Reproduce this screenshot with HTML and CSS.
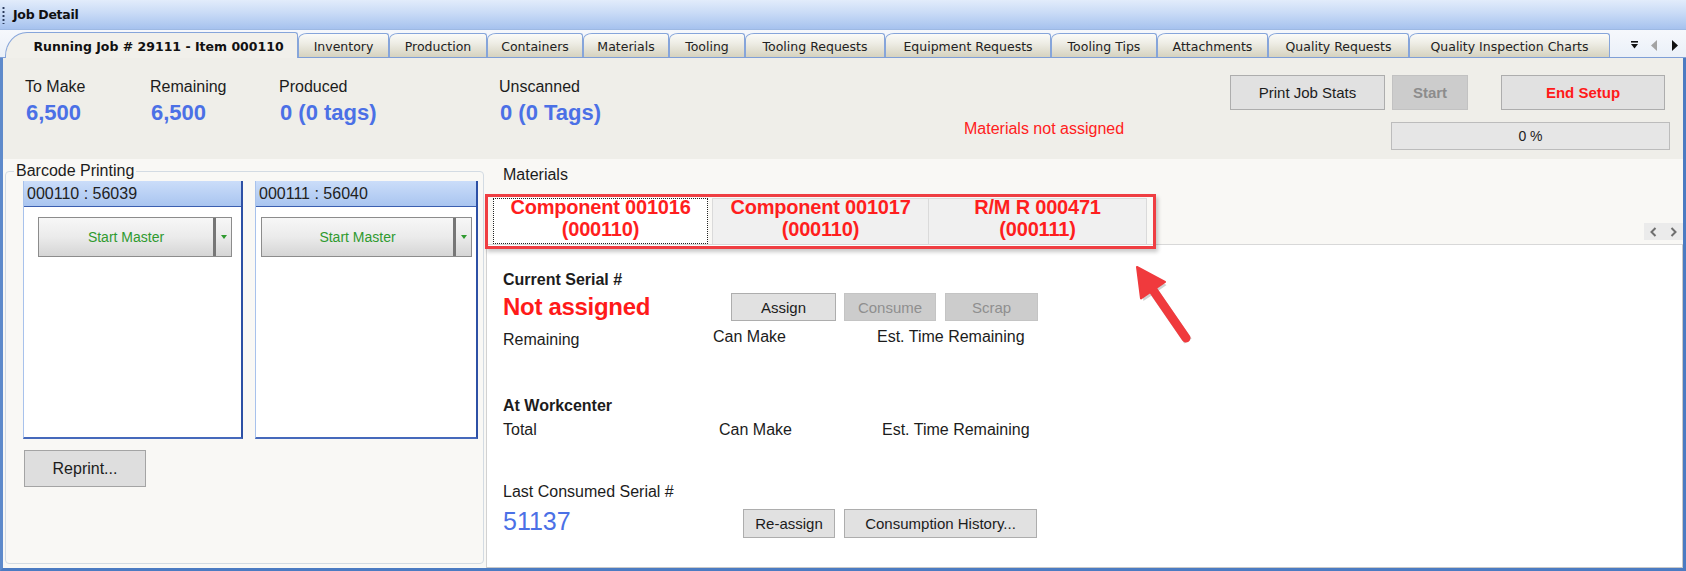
FILE: index.html
```html
<!DOCTYPE html>
<html lang="en">
<head>
<meta charset="utf-8">
<title>Job Detail</title>
<link rel="stylesheet" href="styles.css">
</head>
<body>
<div class="window">
  <div class="titlebar">
    <span class="grip"></span>
    <span class="title">Job Detail</span>
  </div>

  <div class="tabstrip">
    <div class="tab active">Running Job # 29111 - Item 000110</div>
    <div class="tab t-inv">Inventory</div>
    <div class="tab t-prod">Production</div>
    <div class="tab t-cont">Containers</div>
    <div class="tab t-mat">Materials</div>
    <div class="tab t-tool">Tooling</div>
    <div class="tab t-treq">Tooling Requests</div>
    <div class="tab t-ereq">Equipment Requests</div>
    <div class="tab t-tips">Tooling Tips</div>
    <div class="tab t-att">Attachments</div>
    <div class="tab t-qreq">Quality Requests</div>
    <div class="tab t-qic">Quality Inspection Charts</div>
    <div class="tab-nav">
      <svg class="nav-list" width="9" height="10" viewBox="0 0 9 10"><rect x="1" y="1" width="7" height="1.6" fill="#111"/><path d="M1 4h7l-3.5 4.5z" fill="#111"/></svg>
      <svg class="nav-prev" width="6" height="11" viewBox="0 0 6 11"><path d="M6 0v11L0 5.5z" fill="#a3a3a3"/></svg>
      <svg class="nav-next" width="6" height="11" viewBox="0 0 6 11"><path d="M0 0v11l6-5.5z" fill="#111"/></svg>
    </div>
  </div>

  <div class="page">
    <div class="stats-panel">
      <div class="stats">
        <div class="stat stat-make"><div class="lbl">To Make</div><div class="val">6,500</div></div>
        <div class="stat stat-rem"><div class="lbl">Remaining</div><div class="val">6,500</div></div>
        <div class="stat stat-prod"><div class="lbl">Produced</div><div class="val">0 (0 tags)</div></div>
        <div class="stat"><div class="lbl">Unscanned</div><div class="val">0 (0 Tags)</div></div>
      </div>
      <div class="msg">Materials not assigned</div>
      <div class="actions">
        <div class="action-row">
          <button class="btn btn-print">Print Job Stats</button>
          <button class="btn btn-start" disabled>Start</button>
          <button class="btn btn-end">End Setup</button>
        </div>
        <div class="progress">0 %</div>
      </div>
    </div>

    <div class="lower">
      <fieldset class="barcode">
        <legend>Barcode Printing</legend>
        <div class="barcode-inner">
          <div class="panels">
            <div class="bpanel bpanel-a">
              <div class="bhead">000110 : 56039</div>
              <div class="split split-a">
                <span class="split-main">Start Master</span>
                <span class="split-arrow"><svg width="6" height="4" viewBox="0 0 6 4"><path d="M0 0h6L3 4z" fill="#2f9a2f"/></svg></span>
              </div>
            </div>
            <div class="bpanel bpanel-b">
              <div class="bhead">000111 : 56040</div>
              <div class="split split-b">
                <span class="split-main">Start Master</span>
                <span class="split-arrow"><svg width="6" height="4" viewBox="0 0 6 4"><path d="M0 0h6L3 4z" fill="#2f9a2f"/></svg></span>
              </div>
            </div>
          </div>
          <button class="btn btn-reprint">Reprint...</button>
        </div>
      </fieldset>

      <div class="materials">
        <div class="mat-label">Materials</div>
        <div class="mat-tabs">
          <div class="mtab sel"><div class="mtab-text">Component 001016<br>(000110)</div></div>
          <div class="mtab mtab-2"><div class="mtab-text">Component 001017<br>(000110)</div></div>
          <div class="mtab mtab-3"><div class="mtab-text">R/M R 000471<br>(000111)</div></div>
          <div class="mat-scroll">
            <svg width="7" height="10" viewBox="0 0 7 10"><path d="M5.5 1L1.5 5l4 4" fill="none" stroke="#6f6f6f" stroke-width="2"/></svg>
            <svg width="7" height="10" viewBox="0 0 7 10"><path d="M1.5 1l4 4-4 4" fill="none" stroke="#6f6f6f" stroke-width="2"/></svg>
          </div>
        </div>
        <div class="mat-body">
          <div class="sec-title cs-title">Current Serial #</div>
          <div class="row row-serial">
            <div class="cell-serial not-assigned">Not assigned</div>
            <button class="btn btn-assign">Assign</button>
            <button class="btn btn-dis btn-consume" disabled>Consume</button>
            <button class="btn btn-dis btn-scrap" disabled>Scrap</button>
          </div>
          <div class="row row-info1">
            <div class="c-rem">Remaining</div>
            <div class="c-can1">Can Make</div>
            <div>Est. Time Remaining</div>
          </div>
          <div class="sec-title wc-title">At Workcenter</div>
          <div class="row row-info2">
            <div class="c-total">Total</div>
            <div class="c-can2">Can Make</div>
            <div>Est. Time Remaining</div>
          </div>
          <div class="last-label">Last Consumed Serial #</div>
          <div class="row row-last">
            <div class="cell-last last-val">51137</div>
            <button class="btn btn-reassign">Re-assign</button>
            <button class="btn btn-history">Consumption History...</button>
          </div>
        </div>

        <div class="highlight"></div>
        <svg class="callout-arrow" width="80" height="95" viewBox="0 0 80 95">
          <g fill="#000" opacity="0.18" transform="translate(2,3)">
            <path d="M17 12 L44.6 27.1 L36.7 32.5 L69.7 80.4 L62.3 85.6 L29.3 37.7 L21.4 43.1 Z"/>
          </g>
          <line x1="33" y1="35" x2="66" y2="83" stroke="#f03a3d" stroke-width="9" stroke-linecap="round"/>
          <path d="M17 12 L45 27 L21 43.5 Z" fill="#f03a3d" stroke="#f03a3d" stroke-width="2" stroke-linejoin="round"/>
        </svg>
      </div>
    </div>
  </div>
</div>
</body>
</html>
```
FILE: styles.css
```css
* { box-sizing: border-box; }
html, body { margin: 0; padding: 0; }
body {
  width: 1686px;
  height: 571px;
  overflow: hidden;
  font-family: "Liberation Sans", Arial, sans-serif;
  color: #1c1c1c;
  background: #ffffff;
}

.window {
  width: 1686px;
  height: 571px;
  display: flex;
  flex-direction: column;
}

/* ---------- title bar ---------- */
.titlebar {
  height: 30px;
  flex: none;
  display: flex;
  align-items: center;
  background: linear-gradient(#e2ecfb, #c9dbf6 45%, #a6c2ee);
  border-bottom: 1px solid #9db9e4;
}
.grip {
  width: 3px;
  height: 18px;
  margin: 0 8px 0 2px;
  background-image: radial-gradient(circle, #2b3b5c 0.9px, transparent 1.3px);
  background-size: 3px 4px;
}
.title {
  font-family: "DejaVu Sans", sans-serif;
  font-weight: bold;
  font-size: 12.5px;
  letter-spacing: -0.3px;
  color: #111;
}

/* ---------- tab strip ---------- */
.tabstrip {
  height: 28px;
  flex: none;
  display: flex;
  align-items: flex-end;
  padding-left: 5px;
  background: linear-gradient(#f6f8fc, #eaf0f8);
  border-bottom: 1px solid #7f9fd6;
}
.tab {
  height: 24px;
  flex: none;
  display: flex;
  align-items: center;
  justify-content: center;
  padding-top: 1px;
  font-family: "DejaVu Sans", sans-serif;
  font-size: 12.5px;
  color: #222;
  border: 1px solid #86a5da;
  border-bottom: none;
  border-radius: 9px 3px 0 0 / 6px 3px 0 0;
  background: linear-gradient(#fbfbf8, #eeede5 40%, #d5d2bf);
  white-space: nowrap;
}
.tab.active {
  width: 293px;
  height: 26px;
  margin-bottom: -1px;
  padding-left: 14px;
  background: #f1f0eb;
  font-weight: bold;
  color: #111;
  border-radius: 22px 3px 0 0 / 24px 3px 0 0;
}
.t-inv { width: 91px; }
.t-prod { width: 98px; }
.t-cont { width: 96px; }
.t-mat { width: 86px; }
.t-tool { width: 76px; }
.t-treq { width: 140px; }
.t-ereq { width: 166px; }
.t-tips { width: 106px; }
.t-att { width: 111px; }
.t-qreq { width: 141px; }
.t-qic { width: 201px; }

.tab-nav {
  display: flex;
  align-items: center;
  margin-left: 20px;
  margin-bottom: 6px;
  height: 12px;
}
.nav-list { margin-right: 12px; }
.nav-prev { margin-right: 15px; }

/* ---------- page ---------- */
.page {
  flex: 1;
  min-height: 0;
  display: flex;
  flex-direction: column;
  border-left: 3px solid #5e8acb;
  border-right: 3px solid #4b7bc2;
  border-bottom: 3px solid #4b7bc2;
  background: #f9f8f5;
}

.stats-panel {
  height: 101px;
  flex: none;
  display: flex;
  background: #efeee9;
}
.stats {
  width: 961px;
  display: flex;
  padding: 20px 0 0 22px;
}
.stat-make { width: 125px; }
.stat-rem { width: 129px; }
.stat-prod { width: 220px; }
.lbl {
  font-size: 16px;
  line-height: 18px;
}
.val {
  margin-top: 5px;
  padding-left: 1px;
  font-size: 22px;
  line-height: 24px;
  font-weight: bold;
  color: #4b70e6;
}
.msg {
  width: 266px;
  padding-top: 62px;
  font-size: 16px;
  line-height: 18px;
  color: #ff2020;
}
.actions {
  padding-top: 17px;
}
.action-row {
  display: flex;
}

.btn {
  font-family: "Liberation Sans", Arial, sans-serif;
  font-size: 15px;
  color: #1c1c1c;
  background: #e1e1e1;
  border: 1px solid #adadad;
  padding: 0;
  margin: 0;
}
.btn-print { width: 155px; height: 35px; margin-right: 7px; }
.btn-start {
  width: 76px;
  height: 35px;
  margin-right: 33px;
  background: #cccccc;
  border-color: #c2c2c2;
  color: #8c8c8c;
  font-weight: bold;
}
.btn-end {
  width: 164px;
  height: 35px;
  color: #ff1a1a;
  font-weight: bold;
}
.progress {
  width: 279px;
  height: 28px;
  margin: 12px 0 0 161px;
  background: #e6e6e6;
  border: 1px solid #bcbcbc;
  font-size: 14px;
  line-height: 26px;
  text-align: center;
  color: #222;
}

/* ---------- lower area ---------- */
.lower {
  flex: 1;
  min-height: 0;
  display: flex;
}

.barcode {
  flex: none;
  width: 479px;
  margin: 3px 0 4px 2px;
  padding: 0;
  border: 1px solid #d3dbe3;
  border-radius: 4px;
  min-width: 0;
}
.barcode legend {
  margin-left: 8px;
  padding: 0 2px;
  font-size: 16px;
  line-height: 18px;
  color: #1c1c1c;
}
.barcode-inner {
  padding: 1px 5px 0 17px;
}
.panels {
  display: flex;
  gap: 12px;
}
.bpanel {
  height: 258px;
  background: #ffffff;
  border-left: 1px solid #a8c2ec;
  border-right: 2px solid #2d50a5;
  border-bottom: 2px solid #4669bb;
}
.bpanel-a { width: 220px; }
.bpanel-b { width: 223px; }
.bhead {
  height: 26px;
  padding-left: 3px;
  background: linear-gradient(#cbddf9, #a9c5f0);
  border-bottom: 1px solid #3b5fb0;
  font-size: 16px;
  line-height: 25px;
  color: #222;
}
.split {
  display: flex;
  height: 40px;
  margin-top: 10px;
  border: 1px solid #8c8c8c;
  background: linear-gradient(#f7f7f7, #ebebeb 50%, #d5d5d5);
}
.split-a { width: 194px; margin-left: 14px; }
.split-b { width: 211px; margin-left: 5px; }
.split-main {
  flex: 1;
  display: flex;
  align-items: center;
  justify-content: center;
  font-size: 14px;
  color: #2f9a2f;
}
.split-arrow {
  width: 18px;
  display: flex;
  align-items: center;
  justify-content: center;
  border-left: 3px solid #767676;
}
.btn-reprint {
  display: block;
  width: 122px;
  height: 37px;
  margin: 11px 0 0 1px;
  font-size: 16px;
  background: #dedede;
  border-color: #a4a4a4;
}

/* ---------- materials ---------- */
.materials {
  flex: 1;
  min-width: 0;
  margin-left: 2px;
  display: flex;
  flex-direction: column;
  position: relative;
}
.mat-label {
  padding: 7px 0 0 17px;
  font-size: 16px;
  line-height: 18px;
}
.mat-tabs {
  height: 46px;
  margin-top: 14px;
  padding-left: 7px;
  display: flex;
  flex: none;
}
.mtab {
  height: 46px;
  overflow: hidden;
  text-align: center;
  color: #ff1e1e;
  font-weight: bold;
  font-size: 20px;
  line-height: 22px;
  background: #f0f0f0;
  border: 1px solid #dadada;
  border-bottom: none;
}
.mtab-text { margin-top: -3px; letter-spacing: -0.2px; }
.mtab.sel {
  width: 215px;
  margin-right: 4px;
  background: #ffffff;
  border: 1px dotted #222;
}
.mtab-2 { width: 217px; }
.mtab-3 { width: 218px; border-left: none; }
.mat-scroll {
  margin-left: auto;
  align-self: flex-end;
  margin-bottom: 4px;
  width: 39px;
  height: 17px;
  background: #ebebeb;
  display: flex;
  align-items: center;
  justify-content: space-around;
}

.mat-body {
  flex: 1;
  min-height: 0;
  background: #ffffff;
  border-top: 1px solid #d8d8d8;
  border-left: 1px solid #d2d2d2;
  border-right: 1px solid #c9c9c9;
  border-bottom: 1px solid #c9c9c9;
  padding: 26px 0 0 16px;
  font-size: 16px;
  line-height: 18px;
}
.sec-title { font-weight: bold; }
.row { display: flex; }
.row-serial {
  margin-top: 4px;
  align-items: center;
  height: 28px;
}
.cell-serial { width: 228px; flex: none; }
.not-assigned {
  font-size: 24px;
  line-height: 28px;
  font-weight: bold;
  color: #ff1a1a;
  letter-spacing: -0.3px;
}
.btn-assign { width: 105px; height: 28px; margin-right: 8px; }
.btn-dis {
  background: #cccccc;
  border-color: #c4c4c4;
  color: #8f8f8f;
  height: 28px;
}
.btn-consume { width: 92px; margin-right: 9px; }
.btn-scrap { width: 93px; }

.row-info1 { margin-top: 7px; }
.c-rem { width: 210px; padding-top: 3px; }
.c-can1 { width: 164px; }
.wc-title { margin-top: 48px; }
.row-info2 { margin-top: 6px; }
.c-total { width: 216px; }
.c-can2 { width: 163px; }
.last-label { margin-top: 44px; }
.row-last { margin-top: 6px; align-items: flex-start; }
.cell-last { width: 240px; flex: none; }
.last-val {
  font-size: 25px;
  line-height: 28px;
  color: #4b70e6;
}
.btn-reassign { width: 92px; height: 29px; margin: 2px 9px 0 0; }
.btn-history { width: 193px; height: 29px; margin-top: 2px; }

/* ---------- annotations ---------- */
.highlight {
  position: absolute;
  left: -1px;
  top: 35px;
  width: 671px;
  height: 55px;
  border: 3px solid #ef3e42;
  box-shadow: 2px 3px 4px rgba(0, 0, 0, 0.22);
  pointer-events: none;
}
.callout-arrow {
  position: absolute;
  left: 634px;
  top: 96px;
  pointer-events: none;
}
```
